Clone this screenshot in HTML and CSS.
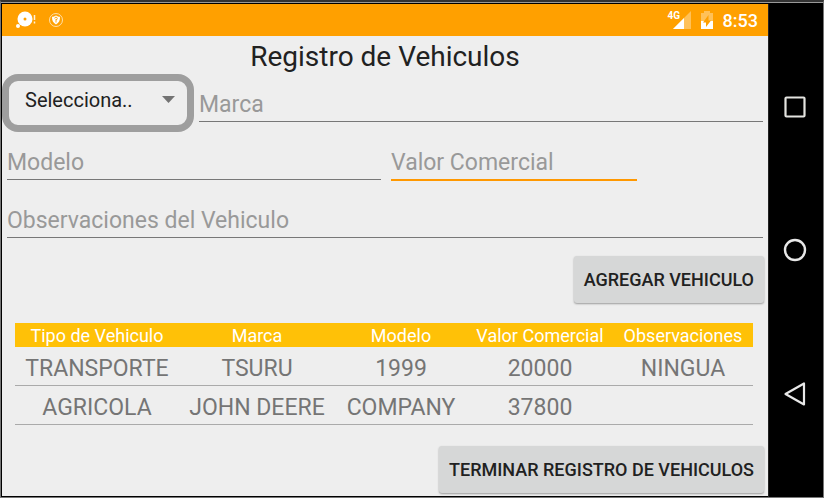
FILE: index.html
```html
<!DOCTYPE html>
<html lang="es">
<head>
<meta charset="utf-8">
<title>Registro de Vehiculos</title>
<meta name="viewport" content="width=device-width, initial-scale=1">
<link rel="stylesheet" href="styles.css">
</head>
<body>
<div class="device">
  <div class="screen">
    <header class="status">
      <div class="status-group">
        <svg width="20" height="18" viewBox="0 0 20 18" aria-hidden="true">
          <circle cx="9" cy="8" r="7.5" fill="#fff"/>
          <circle cx="9" cy="8" r="1.5" fill="#ffa000"/>
          <circle cx="2" cy="15" r="2" fill="#fff"/>
          <path d="M18.500 4v5M18.500 10.500v2" stroke="#fff" stroke-opacity=".85" stroke-width="1.500"/>
        </svg>
        <svg width="14" height="14" viewBox="0 0 14 14" aria-hidden="true">
          <circle cx="7" cy="7" r="6.500" fill="none" stroke="#fff" stroke-opacity=".65"/>
          <path d="M7 2.500c1.500 1 2.500 1.200 4 1.300 0 4-1 6-4 7.700-3-1.700-4-3.700-4-7.700 1.500-.1 2.500-.3 4-1.300z" fill="#fff"/>
          <path d="M7 9.500V6M5.700 5.500a1.300 1.300 0 1 1 1.300 1.300" fill="none" stroke="#ffa000" stroke-width=".9"/>
        </svg>
      </div>
      <div class="status-group">
        <div class="signal">
          <span class="network">4G</span>
          <svg width="18" height="18" viewBox="0 0 18 18" aria-hidden="true">
            <path d="M18 0v18H0z" fill="#fff" fill-opacity=".35"/>
            <path d="M11 7v11H0z" fill="#fff"/>
          </svg>
        </div>
        <svg width="12" height="18" viewBox="0 0 12 18" aria-hidden="true">
          <path d="M3 0h6v2h3v8H0V2h3z" fill="#fff" fill-opacity=".35"/>
          <path d="M0 10h12v8H0z" fill="#fff"/>
          <path d="M7.500 4v5.500H10L5 16v-4.500H2z" fill="#ffa000"/>
        </svg>
        <span class="clock">8:53</span>
      </div>
    </header>
    <main class="content">
      <h1 class="title">Registro de Vehiculos</h1>
      <form class="form">
        <div class="row">
          <div class="spinner">
            <select class="spinner-select" aria-label="Tipo de Vehiculo"><option>Selecciona..</option></select>
            <svg class="spinner-arrow" width="13" height="7" viewBox="0 0 13 7" aria-hidden="true"><path d="M0 0h13L6.500 7z" fill="#737373"/></svg>
          </div>
          <input class="field" type="text" placeholder="Marca" aria-label="Marca">
        </div>
        <div class="row row-split">
          <input class="field" type="text" placeholder="Modelo" aria-label="Modelo">
          <input class="field field-active" type="text" placeholder="Valor Comercial" aria-label="Valor Comercial">
        </div>
        <div class="row">
          <input class="field" type="text" placeholder="Observaciones del Vehiculo" aria-label="Observaciones del Vehiculo">
        </div>
        <div class="actions"><button class="button" type="button">AGREGAR VEHICULO</button></div>
      </form>
      <table class="vehicles">
        <colgroup><col class="col-type"><col class="col-brand"><col class="col-model"><col class="col-value"><col class="col-notes"></colgroup>
        <thead>
          <tr><th>Tipo de Vehiculo</th><th>Marca</th><th>Modelo</th><th>Valor Comercial</th><th>Observaciones</th></tr>
        </thead>
        <tbody>
          <tr><td>TRANSPORTE</td><td>TSURU</td><td>1999</td><td>20000</td><td>NINGUA</td></tr>
          <tr><td>AGRICOLA</td><td>JOHN DEERE</td><td>COMPANY</td><td>37800</td><td></td></tr>
        </tbody>
      </table>
      <div class="actions"><button class="button" type="button">TERMINAR REGISTRO DE VEHICULOS</button></div>
    </main>
  </div>
  <nav class="navbar" aria-label="Sistema">
    <button class="nav-button" type="button" aria-label="Recientes"><svg width="22" height="22" viewBox="0 0 22 22"><rect x="1.500" y="1.500" width="19" height="19" rx="1" fill="none" stroke="#e4e4e0" stroke-width="2.200"/></svg></button>
    <button class="nav-button" type="button" aria-label="Inicio"><svg width="24" height="24" viewBox="0 0 24 24"><circle cx="12" cy="12" r="10" fill="none" stroke="#e8e8e8" stroke-width="2.400"/></svg></button>
    <button class="nav-button" type="button" aria-label="Volver"><svg width="22" height="24" viewBox="0 0 22 24"><path d="M20 1.500v21L1.500 12z" fill="none" stroke="#e8e8e8" stroke-width="2.200" stroke-linejoin="round"/></svg></button>
  </nav>
</div>
</body>
</html>
```
FILE: styles.css
```css
* { box-sizing: border-box; }

body {
  margin: 0;
  background: #222;
  font-family: Roboto, "Liberation Sans", sans-serif;
  color: #212121;
}

.device {
  display: flex;
  min-height: 100vh;
  padding-top: 1px;
  background: #000;
  border: 1px solid #777;
  border-top: 2px solid #333;
  box-shadow: inset 0 1px #999;
}

.screen {
  flex: 1;
  min-width: 0;
  display: flex;
  flex-direction: column;
  margin: 1px 0 1px 1px;
  background: #eee;
}

.status {
  display: flex;
  align-items: center;
  justify-content: space-between;
  height: 32px;
  padding: 0 10px 0 14px;
  background: #ffa000;
  color: #fff;
}

.status-group { display: flex; align-items: center; gap: 10px; }

.status-group:first-child { gap: 13px; }

.signal { position: relative; display: flex; padding-left: 4px; }

.network {
  position: absolute;
  top: -1px;
  left: -1px;
  font-size: 10px;
  line-height: 12px;
  font-weight: 700;
}

.clock { padding-top: 2px; font-size: 18px; font-weight: 500; line-height: 24px; }

.content { flex: 1; padding: 0 4px 3px 0; }

.title {
  margin: 0;
  padding: 4px 0 0 4px;
  font-size: 28px;
  font-weight: 400;
  line-height: 34px;
  text-align: center;
}

.row {
  display: flex;
  align-items: flex-start;
  gap: 5px;
  height: 58px;
  padding: 0 1px 0 5px;
}

.row:first-child { padding-left: 0; }

.row-split {
  display: grid;
  grid-template-columns: 374fr 246fr 116fr;
  gap: 10px;
}

.spinner {
  position: relative;
  flex: 0 0 192px;
  height: 58px;
  border: 7px solid #9e9e9e;
  border-radius: 16px;
}

.spinner-select {
  appearance: none;
  width: 100%;
  height: 38px;
  padding: 0 16px;
  border: 0;
  background: transparent;
  color: #212121;
  font: 400 20px/24px Roboto, "Liberation Sans", sans-serif;
}

.spinner-arrow { position: absolute; top: 15px; right: 12px; pointer-events: none; }

.field {
  flex: 1;
  min-width: 0;
  width: 100%;
  height: 48px;
  padding: 16px 0 3px;
  border: 0;
  border-bottom: 1px solid #777;
  border-radius: 0;
  outline: 0;
  background: transparent;
  color: #212121;
  font: 400 23px/28px Roboto, "Liberation Sans", sans-serif;
}

.field::placeholder { color: #999; opacity: 1; }

.field-active { height: 49px; border-bottom: 2px solid #ff9800; }

.actions { display: flex; justify-content: flex-end; }

.form .actions { padding-top: 8px; }

.button {
  height: 47px;
  padding: 1px 10px 0;
  border: 0;
  border-radius: 3px;
  background: #d6d7d7;
  color: #212121;
  box-shadow: 0 1px 2px rgba(0, 0, 0, .35);
  font: 500 18px/24px Roboto, "Liberation Sans", sans-serif;
}

.vehicles {
  width: calc(100% - 24px);
  margin: 20px 11px 21px 13px;
  border-collapse: separate;
  border-spacing: 0;
  table-layout: fixed;
}

.col-type { width: 164px; }
.col-brand { width: 156px; }
.col-model { width: 132px; }
.col-value { width: 146px; }
.col-notes { width: 140px; }

.vehicles th {
  height: 24px;
  padding: 2px 0 0;
  background: #ffc107;
  color: #fff;
  font-size: 18px;
  font-weight: 400;
  line-height: 22px;
}

.vehicles td {
  height: 39px;
  padding: 5px 0 0;
  border-bottom: 1px solid #aaa;
  color: #757575;
  font-size: 23px;
  line-height: 28px;
  text-align: center;
}

.navbar {
  flex: 0 0 55px;
  display: flex;
  flex-direction: column;
  justify-content: space-around;
  align-items: center;
  padding: 31px 2px 31px 0;
  border-left: 1px solid #222;
  background: #000;
  margin-top: 1px;
}

.nav-button {
  display: grid;
  place-items: center;
  width: 48px;
  height: 48px;
  padding: 0;
  border: 0;
  background: transparent;
}
```
